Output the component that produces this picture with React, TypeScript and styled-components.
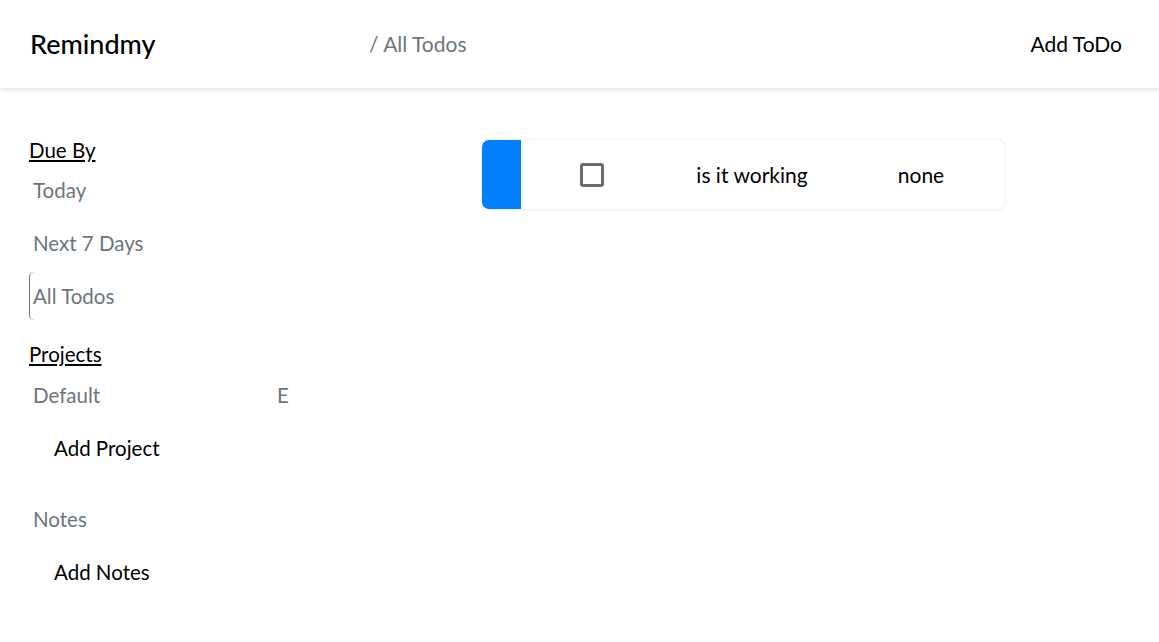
import React from "react"
import styled, { createGlobalStyle } from "styled-components"

//------------------------------
// Data
//------------------------------
const dueBy = [
  { name: "Today", active: false },
  { name: "Next 7 Days", active: false },
  { name: "All Todos", active: true },
]

const todos = [{ title: "is it working", project: "none", color: "#0080ff" }]

//------------------------------
// Main
//------------------------------
export default function App() {
  return (
    <>
      <GlobalStyle />
      <Page>
        <Header>
          <Brand>Remindmy</Brand>
          <Crumb>/ All Todos</Crumb>
          <HeaderAction>Add ToDo</HeaderAction>
        </Header>
        <Body>
          <Sidebar>
            <SectionTitle>Due By</SectionTitle>
            <ItemList>
              {dueBy.map((item) => (
                <NavItem key={item.name} $active={item.active}>
                  {item.name}
                </NavItem>
              ))}
            </ItemList>
            <SectionTitle $top={22}>Projects</SectionTitle>
            <ItemList $top={5}>
              <NavItem>
                <ProjectName>Default</ProjectName>
                <EditMark>E</EditMark>
              </NavItem>
              <AddItem>Add Project</AddItem>
            </ItemList>
            <ItemList $top={23}>
              <NavItem>Notes</NavItem>
              <AddItem>Add Notes</AddItem>
            </ItemList>
          </Sidebar>
          <Content>
            {todos.map((todo) => (
              <TodoCard key={todo.title}>
                <Strip $color={todo.color} />
                <CheckCell>
                  <CheckBox />
                </CheckCell>
                <TitleCell>{todo.title}</TitleCell>
                <ProjectCell>{todo.project}</ProjectCell>
              </TodoCard>
            ))}
          </Content>
        </Body>
      </Page>
    </>
  )
}

//------------------------------
// Styles
//------------------------------
const GlobalStyle = createGlobalStyle`
  body {
    margin: 0;
    background: #fff;
    font-family: Lato, "Noto Sans", sans-serif;
    color: #000;
  }
`

const Page = styled.div`
  display: flex;
  flex-direction: column;
  min-height: 100vh;
`

const Header = styled.header`
  display: flex;
  align-items: center;
  height: 88px;
  padding: 0 37px 2px 30px;
  box-sizing: border-box;
  background: #fff;
  box-shadow: 0 2px 6px rgba(0, 0, 0, 0.12);
`

const Brand = styled.div`
  width: 339px;
  font-size: 27px;
  font-weight: 500;
  color: #000;
`

const Crumb = styled.div`
  flex: 1;
  font-size: 21px;
  color: #6c757d;
`

const HeaderAction = styled.div`
  font-size: 21px;
  color: #000;
  cursor: pointer;
`

const Body = styled.div`
  display: flex;
`

const Sidebar = styled.nav`
  display: flex;
  flex-direction: column;
  flex-shrink: 0;
  width: 481px;
  padding: 50px 0 0 29px;
  box-sizing: border-box;
`

const SectionTitle = styled.div<{ $top?: number }>`
  margin-top: ${(p) => p.$top ?? 0}px;
  height: 24px;
  line-height: 24px;
  font-size: 20.5px;
  text-decoration: underline;
  color: #000;
`

const ItemList = styled.div<{ $top?: number }>`
  display: flex;
  flex-direction: column;
  gap: 5px;
  margin-top: ${(p) => p.$top ?? 4}px;
`

const NavItem = styled.div<{ $active?: boolean }>`
  display: flex;
  align-items: center;
  width: 260px;
  height: 48px;
  padding-left: 3px;
  font-size: 20.5px;
  color: #6c757d;
  border-left: 1px solid ${(p) => (p.$active ? "#6c757d" : "transparent")};
  border-radius: 5px;
  cursor: pointer;
`

const ProjectName = styled.span`
  width: 244px;
`

const EditMark = styled.span`
  color: #6c757d;
`

const AddItem = styled.div`
  display: flex;
  align-items: center;
  height: 48px;
  padding-left: 25px;
  font-size: 20.5px;
  color: #000;
  cursor: pointer;
`

const Content = styled.main`
  flex: 1;
  padding-top: 51px;
`

const TodoCard = styled.div`
  display: flex;
  align-items: center;
  width: 525px;
  height: 71px;
  box-sizing: border-box;
  border: 1px solid #f0f0f0;
  border-radius: 8px;
  overflow: hidden;
`

const Strip = styled.div<{ $color: string }>`
  align-self: stretch;
  width: 40px;
  margin: -1px 0 -1px -1px;
  background: ${(p) => p.$color};
`

const CheckCell = styled.div`
  display: flex;
  justify-content: center;
  width: 141px;
`

const CheckBox = styled.div`
  width: 18px;
  height: 18px;
  border: 3px solid #6b6b6b;
  border-radius: 3px;
`

const TitleCell = styled.div`
  width: 180px;
  text-align: center;
  font-size: 21px;
`

const ProjectCell = styled.div`
  width: 158px;
  text-align: center;
  font-size: 21px;
`
